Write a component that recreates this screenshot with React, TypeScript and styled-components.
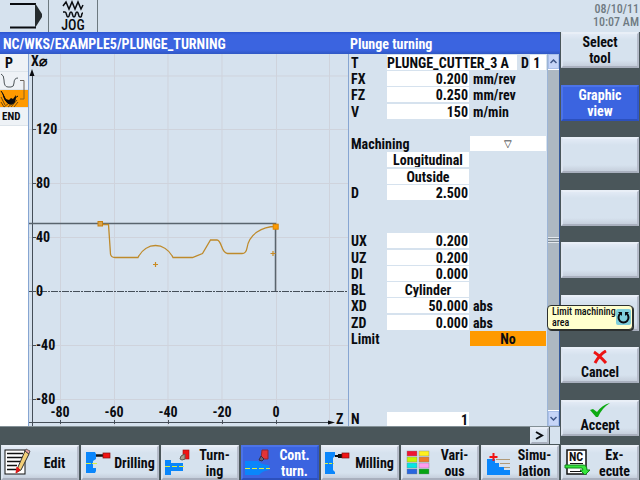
import React from "react";
import styled, { createGlobalStyle, css } from "styled-components";

const ink = "#0a0c10";
const pale = "#d6e2ee";
const slate = "#4a565a";
const blue = "#3b64e0";
const orange = "#ff9a00";

const GlobalStyle = createGlobalStyle`
  * { box-sizing: border-box; }
  html, body { margin: 0; padding: 0; }
  body, button, input, select {
    font-family: "Liberation Sans Narrow", "Roboto Condensed", Roboto, "Liberation Sans", sans-serif;
    font-size: 14px;
    font-weight: 700;
    line-height: 16px;
    color: ${ink};
  }
`;

const Screen = styled.div`
  display: flex;
  flex-direction: column;
  min-height: 100vh;
  background: ${slate};
`;

const StatusBar = styled.header`
  display: flex;
  height: 32px;
  background: ${pale};
`;

const StatusCell = styled.div`
  width: 49px;
  border-right: 1px solid #6d7980;
  display: flex;
  flex-direction: column;
  align-items: center;
  font-weight: 500;
  line-height: 12px;
`;

const Clock = styled.time`
  margin-left: auto;
  padding: 3px 1px 0 0;
  text-align: right;
  font-size: 12px;
  line-height: 13px;
  font-weight: 500;
  color: #6f7a82;
`;

const Workspace = styled.main`
  flex: 1;
  display: grid;
  grid-template-columns: minmax(0, 1fr) 80px;
`;

const Editor = styled.div`
  display: grid;
  grid-template-columns: 28px minmax(0, 1fr) 212px;
  grid-template-rows: 22px minmax(0, 1fr) 19px;
`;

const Title = styled.h1<{ $wide?: boolean }>`
  margin: 0;
  padding-left: ${(p) => (p.$wide ? 3 : 2)}px;
  grid-column: ${(p) => (p.$wide ? "span 2" : "auto")};
  background: linear-gradient(#2c55cf, ${blue} 3px, ${blue} 18px, #2f57c4);
  color: #fff;
  font-size: 14px;
  font-weight: 700;
  line-height: 24px;
  white-space: nowrap;
  overflow: hidden;
`;

const ProgramList = styled.ol`
  margin: 0;
  padding: 0;
  list-style: none;
  background: #fff;
`;

const ProgramStep = styled.li<{ $active?: boolean; $kind?: "text" | "small" }>`
  height: 18px;
  padding-left: ${(p) => (p.$kind === "text" ? 5 : p.$kind === "small" ? 2 : 0)}px;
  border-bottom: 1px solid #dde4ea;
  background: ${(p) => (p.$active ? orange : "#eef2f6")};
  font-size: ${(p) => (p.$kind === "small" ? 11 : 14)}px;
  line-height: 18px;
  svg { display: block; }
`;

const Plot = styled.section`
  min-width: 0;
  min-height: 0;
  background: ${pale};
  border-left: 1px solid #86a5d2;
  overflow: hidden;
  svg { display: block; width: 100%; height: 100%; }
  text { font-size: 14px; font-weight: 700; fill: ${ink}; }
`;

const Side = styled.section`
  display: grid;
  grid-template-columns: minmax(0, 1fr) 13px;
  min-height: 0;
  background: ${pale};
  border-left: 1px solid #86a5d2;
`;

const Form = styled.form`
  display: grid;
  grid-template-rows: repeat(22, minmax(0, 1fr)) 14px;
  padding-top: 1px;
  min-height: 0;
  overflow: hidden;
`;

const Row = styled.div`
  display: grid;
  grid-template-columns: 37px 82px minmax(0, 1fr);
  column-gap: 1px;
  padding-right: 1px;
  min-height: 0;
  line-height: 16px;
  &:last-child { line-height: 14px; }
`;

const ToolRow = styled(Row)`
  grid-template-columns: 38px 130px minmax(0, 1fr) 16px;
  column-gap: 0;
`;

const Label = styled.label<{ $wide?: boolean }>`
  padding-left: 2px;
  grid-column: ${(p) => (p.$wide ? "span 2" : "auto")};
  white-space: nowrap;
`;

const EdgeLabel = styled(Label)`
  padding-left: 4px;
`;

const Unit = styled.span`
  padding-left: 3px;
`;

const fieldLook = css`
  appearance: none;
  width: 100%;
  min-width: 0;
  height: 15px;
  margin: 0;
  border: 0;
  border-radius: 0;
  background: #fff;
  line-height: 14px;
  outline: 0;
`;

const Field = styled.input<{ $left?: boolean }>`
  ${fieldLook}
  padding: 1px 1px 0 0;
  text-align: ${(p) => (p.$left ? "left" : "right")};
`;

const Choice = styled.select<{ $wide?: boolean; $active?: boolean; $symbol?: boolean }>`
  ${fieldLook}
  padding: 1px 0 0;
  grid-column: ${(p) => (p.$wide ? 3 : 2)};
  text-align: center;
  text-align-last: center;
  background: ${(p) => (p.$active ? orange : "#fff")};
  font-size: ${(p) => (p.$symbol ? 10 : 14)}px;
  font-weight: ${(p) => (p.$symbol ? 400 : 700)};
`;

const Scrollbar = styled.div`
  display: flex;
  flex-direction: column;
  border-right: 1px solid #365a9c;
  border-left: 1px solid #9db5d6;
  background: #fff;
`;

const Track = styled.div`
  flex: 1;
  display: flex;
  align-items: center;
  margin: 1px 0;
  background: #adb8c2;
`;

const Grip = styled.span`
  width: 100%;
  height: 6px;
  border: solid #e4e9ee;
  border-width: 1px 0;
  background: linear-gradient(#818c95 1px, #c7d0d8 1px, #c7d0d8 3px, #818c95 3px);
`;

const ScrollButton = styled.button`
  height: 15px;
  padding: 0;
  border: 1px solid #a9bfe8;
  background: #c6d5f7;
  display: grid;
  place-items: center;
`;

const Strip = styled.div`
  grid-column: 1 / -1;
  display: flex;
  justify-content: flex-end;
  border-top: 1px solid #839096;
  padding-bottom: 1px;
`;

const StripEnd = styled.span`
  width: 10px;
  margin-left: 1px;
  background: ${pale};
`;

const SoftKey = styled.button<{ $active?: boolean }>`
  height: 36px;
  width: 100%;
  padding: 0 2px;
  border: 2px solid;
  border-color: ${(p) => (p.$active ? "#4c73e8 #3158cc #2c50bd #4c73e8" : "#e9eff7 #b5bcca #a9b0be #dde5f0")};
  background: ${(p) =>
    p.$active ? blue : "linear-gradient(#e2eaf5, #d6e2ee 6px, #d6e2ee 26px, #c6cfdc)"};
  color: ${(p) => (p.$active ? "#fff" : ink)};
  display: flex;
  flex-direction: column;
  align-items: center;
  justify-content: center;
  line-height: 16px;
  svg { flex: none; }
`;

const NextKey = styled(SoftKey)`
  width: 19px;
  height: 17px;
`;

const SideKeys = styled.nav`
  position: relative;
  display: flex;
  flex-direction: column;
  justify-content: space-between;
  padding: 0 1px 9px;
`;

const Tooltip = styled.div`
  position: absolute;
  right: 7px;
  top: 66%;
  width: 86px;
  height: 25px;
  padding: 0 3px 0 4px;
  display: flex;
  align-items: center;
  justify-content: space-between;
  border: 1px solid #2c3030;
  border-radius: 4px;
  box-shadow: 1px 1px 0 #2c3030;
  background: #ffffcd;
  font-size: 10px;
  font-weight: 500;
  line-height: 11px;
  white-space: nowrap;
  svg { flex: none; }
`;

const BottomKeys = styled.nav`
  display: grid;
  grid-template-columns: repeat(8, minmax(0, 1fr));
  column-gap: 2px;
  padding: 0 1px;
`;

const BottomKey = styled(SoftKey)`
  height: 35px;
  padding: 0;
  flex-direction: row;
  justify-content: flex-start;
`;

const KeyText = styled.span`
  flex: 1;
  white-space: pre-line;
  text-align: center;
`;

const Jog = () => (
  <svg width="22" height="19" viewBox="63 0 22 19" fill="none" stroke={ink} strokeWidth="1.5">
    <path d="M64 6l3-4 3 7 3-7 3 7 3-7 3 7 2-4" />
    <path d="M64 12h2c2 0 1 5 3 5s1-5 3-5 1 5 3 5 1-5 3-5 1 5 3 5h1c1 0 0-4 2-4" />
  </svg>
);

const yLabels: [string, number][] = [["120", 134], ["80", 188], ["40", 242], ["0", 296], ["-40", 350], ["-80", 404]];
const xLabels: [string, number][] = [["-80", 60], ["-60", 114], ["-40", 168], ["-20", 222], ["0", 276]];

const Chart = () => (
  <svg viewBox="29 54 319 372" preserveAspectRatio="xMinYMin meet" role="img" aria-label="Contour">
    <path
      d="M60.5 54V426M114.5 54V426M168 54V426M222 54V426M276.5 54V426M329.5 54V426M28 76H348M28 129.5H348M28 183.5H348M28 237.5H348M28 345.5H348M28 399.5H348"
      stroke="#cfd3dc"
      fill="none"
    />
    <g stroke="#454e58" fill="none">
      <path d="M32.5 75V426M29 422.5H330" />
      <path d="M29 291.5H348" strokeDasharray="7 1 2 1" />
      <path d="M29 223.5H275.5V291" strokeWidth="1.5" stroke="#59646d" />
      <path d="M32 129.5h4M32 183.5h4M32 237.5h4M32 291.5h4M32 345.5h4M32 399.5h4M60.5 420v4M114.5 420v4M168.5 420v4M222.5 420v4M276.5 420v4" />
    </g>
    <path d="M32 69l2.500 7h-5zM335 422.500l-7-2v4z" fill={ink} />
    <path
      d="M100 224.500H108.500L110.500 254Q111 257.500 115 257.500H138C142 249.500 149 245.500 155.500 245.500S169 249.500 173 257.500H192.500L202.500 253.500L210.500 240H217C222 240 221 253.500 227.500 253.500H242C245 253.500 246.500 251 247 248C249 234 262 226.500 276 226.500"
      stroke="#be8a2b"
      strokeWidth="1.300"
      fill="none"
    />
    <path d="M153 264.500h5M155.500 262v5M270.500 253.500h5M273 251v5" stroke="#c98a22" strokeWidth="1.200" />
    <rect x="98" y="221.500" width="4.500" height="4.500" fill="#d9a44c" stroke="#c98110" />
    <rect x="273.200" y="224.200" width="5" height="5" fill={orange} stroke="#d98400" />
    <text x="31" y="66">X⌀</text>
    {yLabels.map(([t, y]) => (
      <text key={t} x="36" y={y}>{t}</text>
    ))}
    {xLabels.map(([t, x]) => (
      <text key={t} x={x} y="417" textAnchor="middle">{t}</text>
    ))}
    <text x="336" y="424">Z</text>
  </svg>
);

const icons: Record<string, React.ReactNode> = {
  edit: (
    <g transform="translate(-2 0)">
      <rect x="4" y="4" width="20" height="24" fill="#fff" stroke="#111" />
      <path d="M6 7.500h16M6 11.500h16M6 15.500h13M6 19.500h10M6 23.500h13" stroke="#111" strokeWidth="1.500" />
      <path d="M24 5l4 3-8 16-4 2 1-5z" fill="#f2cf78" stroke="#333" />
      <path d="M24 5l1-2 4 2-1 3z" fill="#e9a0a0" stroke="#333" strokeWidth=".7" />
      <path d="M16 21l3 3-4 3z" fill="#e01818" stroke="#e01818" />
    </g>
  ),
  drill: (
    <>
      <path d="M3 6h9l1 2v5l-3 2v7h3v3l-1 2H3z" fill="#0a86fb" />
      <path d="M3 17.500h11" stroke="#d9ef40" strokeDasharray="5 1" />
      <path d="M13 9.500h7" stroke="#111" strokeWidth="2.500" />
      <rect x="20" y="7" width="7" height="5" fill="#f11414" stroke="#841010" strokeWidth=".7" />
    </>
  ),
  turn: (
    <>
      <path d="M2 14h6v3h12v8H8v4H2z" fill="#0a86fb" />
      <path d="M2 20.500h19" stroke="#d9ef40" strokeDasharray="5 2" />
      <rect x="20" y="4" width="6" height="9" fill="#f11414" stroke="#9a1010" strokeWidth=".6" />
      <path d="M18 10l4-2v5l-3 1-2-1z" fill="#a5a091" stroke="#5f5b52" />
    </>
  ),
  cont: (
    <>
      <path d="M2 15h13q4 4 11 4v5q-7 1-10 5H2z" fill="#0a86fb" />
      <path d="M2 22.500h25" stroke="#d9ef40" strokeDasharray="5 2" />
      <path d="M19 4h6v9h-7z" fill="#e23336" stroke="#8f2732" />
      <path d="M18 10l-2 4 3 1 2-2z" fill="#6d6470" stroke="#332f45" />
    </>
  ),
  mill: (
    <>
      <path d="M2 6h10v4l-2 2v12l2 2v2H2z" fill="#0a86fb" />
      <path d="M2 17.500h9" stroke="#d9ef40" strokeDasharray="3 1" />
      <path d="M12 10h3" stroke="#111" strokeWidth="2" />
      <path d="M15 10h5" stroke="#111" strokeWidth="4" />
      <rect x="19" y="7" width="7" height="5" fill="#f11414" stroke="#841010" strokeWidth=".7" />
    </>
  ),
  various: (
    <>
      {["#f01432", "#fff01e", "#c5f500", "#ee7a28", "#06e5e2", "#ff9cf0", "#2866df", "#06a413"].map((c, i) => (
        <rect key={c} x={4 + (i % 2) * 12} y={5 + Math.floor(i / 2) * 6} width="10" height="5" fill={c} stroke="#7a8187" strokeWidth=".4" />
      ))}
    </>
  ),
  simu: (
    <>
      <path d="M4 13h8v4h4v4h5v3h6v5H4z" fill="#0a86fb" />
      <path d="M13 13.500h14M17 17.500h10M21 21.500h6" stroke="#b09a78" />
      <path d="M6.500 11h8M10.500 7v8" stroke="#f11414" strokeWidth="2" />
    </>
  ),
  execute: (
    <>
      <rect x="4" y="4" width="19" height="24" fill="#fff" stroke="#111" strokeWidth="1.500" />
      <text x="6" y="15" fontSize="12" fontWeight="700" fill="#111">NC</text>
      <path d="M7 17.500h13M7 25.500h11" stroke="#111" />
      <path d="M2 19h18q4 0 4 5h3l-5 5-5-5h3l-1-2H2z" fill="#35e63b" stroke="#12831c" />
    </>
  ),
};

const bottom: [string, string][] = [
  ["edit", "Edit"],
  ["drill", "Drilling"],
  ["turn", "Turn-\ning"],
  ["cont", "Cont.\nturn."],
  ["mill", "Milling"],
  ["various", "Vari-\nous"],
  ["simu", "Simu-\nlation"],
  ["execute", "Ex-\necute"],
];

type Param = {
  label?: string;
  value?: string;
  unit?: string;
  choice?: boolean;
  wide?: boolean;
  active?: boolean;
  symbol?: boolean;
};

const params: Param[] = [
  { label: "FX", value: "0.200", unit: "mm/rev" },
  { label: "FZ", value: "0.250", unit: "mm/rev" },
  { label: "V", value: "150", unit: "m/min" },
  {},
  { label: "Machining", value: "▽", choice: true, wide: true, symbol: true },
  { value: "Longitudinal", choice: true },
  { value: "Outside", choice: true },
  { label: "D", value: "2.500" },
  {},
  {},
  { label: "UX", value: "0.200" },
  { label: "UZ", value: "0.200" },
  { label: "DI", value: "0.000" },
  { label: "BL", value: "Cylinder", choice: true },
  { label: "XD", value: "50.000", unit: "abs" },
  { label: "ZD", value: "0.000", unit: "abs" },
  { label: "Limit", value: "No", choice: true, wide: true, active: true },
  {},
  {},
  {},
  {},
  { label: "N", value: "1" },
];

const ParamRow = ({ p, id }: { p: Param; id: string }) => (
  <Row>
    {p.label ? <Label htmlFor={id} $wide={p.wide}>{p.label}</Label> : <span />}
    {p.value &&
      (p.choice ? (
        <Choice id={id} $wide={p.wide} $active={p.active} $symbol={p.symbol} aria-label={p.label ?? p.value}>
          <option>{p.value}</option>
        </Choice>
      ) : (
        <Field id={id} defaultValue={p.value} />
      ))}
    {p.unit && <Unit>{p.unit}</Unit>}
  </Row>
);

const Chevron = ({ down }: { down?: boolean }) => (
  <svg width="7" height="5" viewBox="0 0 7 5" fill="none" stroke="#3f5685" strokeWidth="1.500">
    <path d={down ? "M.5 1l3 3 3-3" : "M.5 4l3-3 3 3"} />
  </svg>
);

export default function App() {
  return (
    <Screen>
      <GlobalStyle />
      <StatusBar>
        <StatusCell>
          <svg width="48" height="32" viewBox="0 0 48 32">
            <path d="M10 4h26M10 27.500h26" fill="none" stroke={ink} strokeWidth="2" />
            <path d="M35 3l7 11v3l-7 11z" fill="#252b2e" />
          </svg>
        </StatusCell>
        <StatusCell>
          <Jog />
          JOG
        </StatusCell>
        <Clock>08/10/11<br />10:07 AM</Clock>
      </StatusBar>
      <Workspace>
        <Editor>
          <Title $wide>NC/WKS/EXAMPLE5/PLUNGE_TURNING</Title>
          <Title as="h2">Plunge turning</Title>
          <ProgramList>
            <ProgramStep $kind="text">P</ProgramStep>
            <ProgramStep>
              <svg width="27" height="18" viewBox="0 72 27 18" fill="none" stroke="#4d5458">
                <path d="M1 74q3 1 3 6 0 7 4 7h3q3 0 3-4 0-5 4-5" />
                <path d="M20 80.500h4V99h-4" stroke="#6d655c" />
              </svg>
            </ProgramStep>
            <ProgramStep $active>
              <svg width="27" height="18" viewBox="0 90 27 18">
                <path d="M1 97l4 8M1 102l3 5M4 107l5-4M8 107l5-4M11 107l6-7M14 107l4-5" stroke="#6f4a10" fill="none" />
                <path d="M2 92l4 7 3 1 2-2 2 1 3-4q0 9-5 9H9Q4 102 2 92z" fill={ink} />
                <path d="M1 91l2 3q2 8 6 10h3q3 0 3-6l3-2" fill="none" stroke={ink} />
                <path d="M24 89v10h-4" fill="none" stroke="#8a601f" />
              </svg>
            </ProgramStep>
            <ProgramStep $kind="small">END</ProgramStep>
          </ProgramList>
          <Plot><Chart /></Plot>
          <Side>
            <Form onSubmit={(e) => e.preventDefault()}>
              <ToolRow>
                <Label htmlFor="tool">T</Label>
                <Field id="tool" $left defaultValue="PLUNGE_CUTTER_3 A" />
                <EdgeLabel htmlFor="edge">D</EdgeLabel>
                <Field id="edge" $left defaultValue=" 1" />
              </ToolRow>
              {params.map((p, i) => <ParamRow key={i} p={p} id={`param-${i}`} />)}
            </Form>
            <Scrollbar>
              <ScrollButton aria-label="Scroll up"><Chevron /></ScrollButton>
              <Track><Grip /></Track>
              <ScrollButton aria-label="Scroll down"><Chevron down /></ScrollButton>
            </Scrollbar>
          </Side>
          <Strip>
            <NextKey aria-label="More">
              <svg width="11" height="9" viewBox="0 0 11 9" fill="none" stroke={ink} strokeWidth="2"><path d="M2 1l6 3.500-6 3.500" /></svg>
            </NextKey>
            <StripEnd />
          </Strip>
        </Editor>
        <SideKeys>
          <SoftKey>Select<br />tool</SoftKey>
          <SoftKey $active>Graphic<br />view</SoftKey>
          <SoftKey aria-label="Unassigned 3" />
          <SoftKey aria-label="Unassigned 4" />
          <SoftKey aria-label="Unassigned 5" />
          <SoftKey aria-label="Unassigned 6" />
          <SoftKey>
            <svg width="16" height="14" viewBox="0 0 16 14"><path d="M2 2q5 3 12 11M14 1Q8 4 3 13" stroke="#ec1313" strokeWidth="3" fill="none" /></svg>
            Cancel
          </SoftKey>
          <SoftKey>
            <svg width="20" height="14" viewBox="0 0 20 14"><path d="M0 7l3-1 4 3Q12 2 20 0 12 5 8 14H6z" fill="#0daa12" /></svg>
            Accept
          </SoftKey>
          <Tooltip role="tooltip">
            <span>Limit machining<br />area</span>
            <svg width="15" height="16" viewBox="0 0 15 16">
              <rect width="15" height="16" rx="2" fill="#7fcfdb" />
              <path d="M4.500 4.500a5 5 0 1 0 6 0" fill="none" stroke={ink} strokeWidth="2" />
              <path d="M2 3h4v4zM13 3H9v4z" fill={ink} />
            </svg>
          </Tooltip>
        </SideKeys>
      </Workspace>
      <BottomKeys>
        {bottom.map(([icon, text]) => (
          <BottomKey key={icon} $active={icon === "cont"}>
            <svg width="29" height="32" viewBox="0 1 29 32" fill="none">{icons[icon]}</svg>
            <KeyText>{text}</KeyText>
          </BottomKey>
        ))}
      </BottomKeys>
    </Screen>
  );
}
